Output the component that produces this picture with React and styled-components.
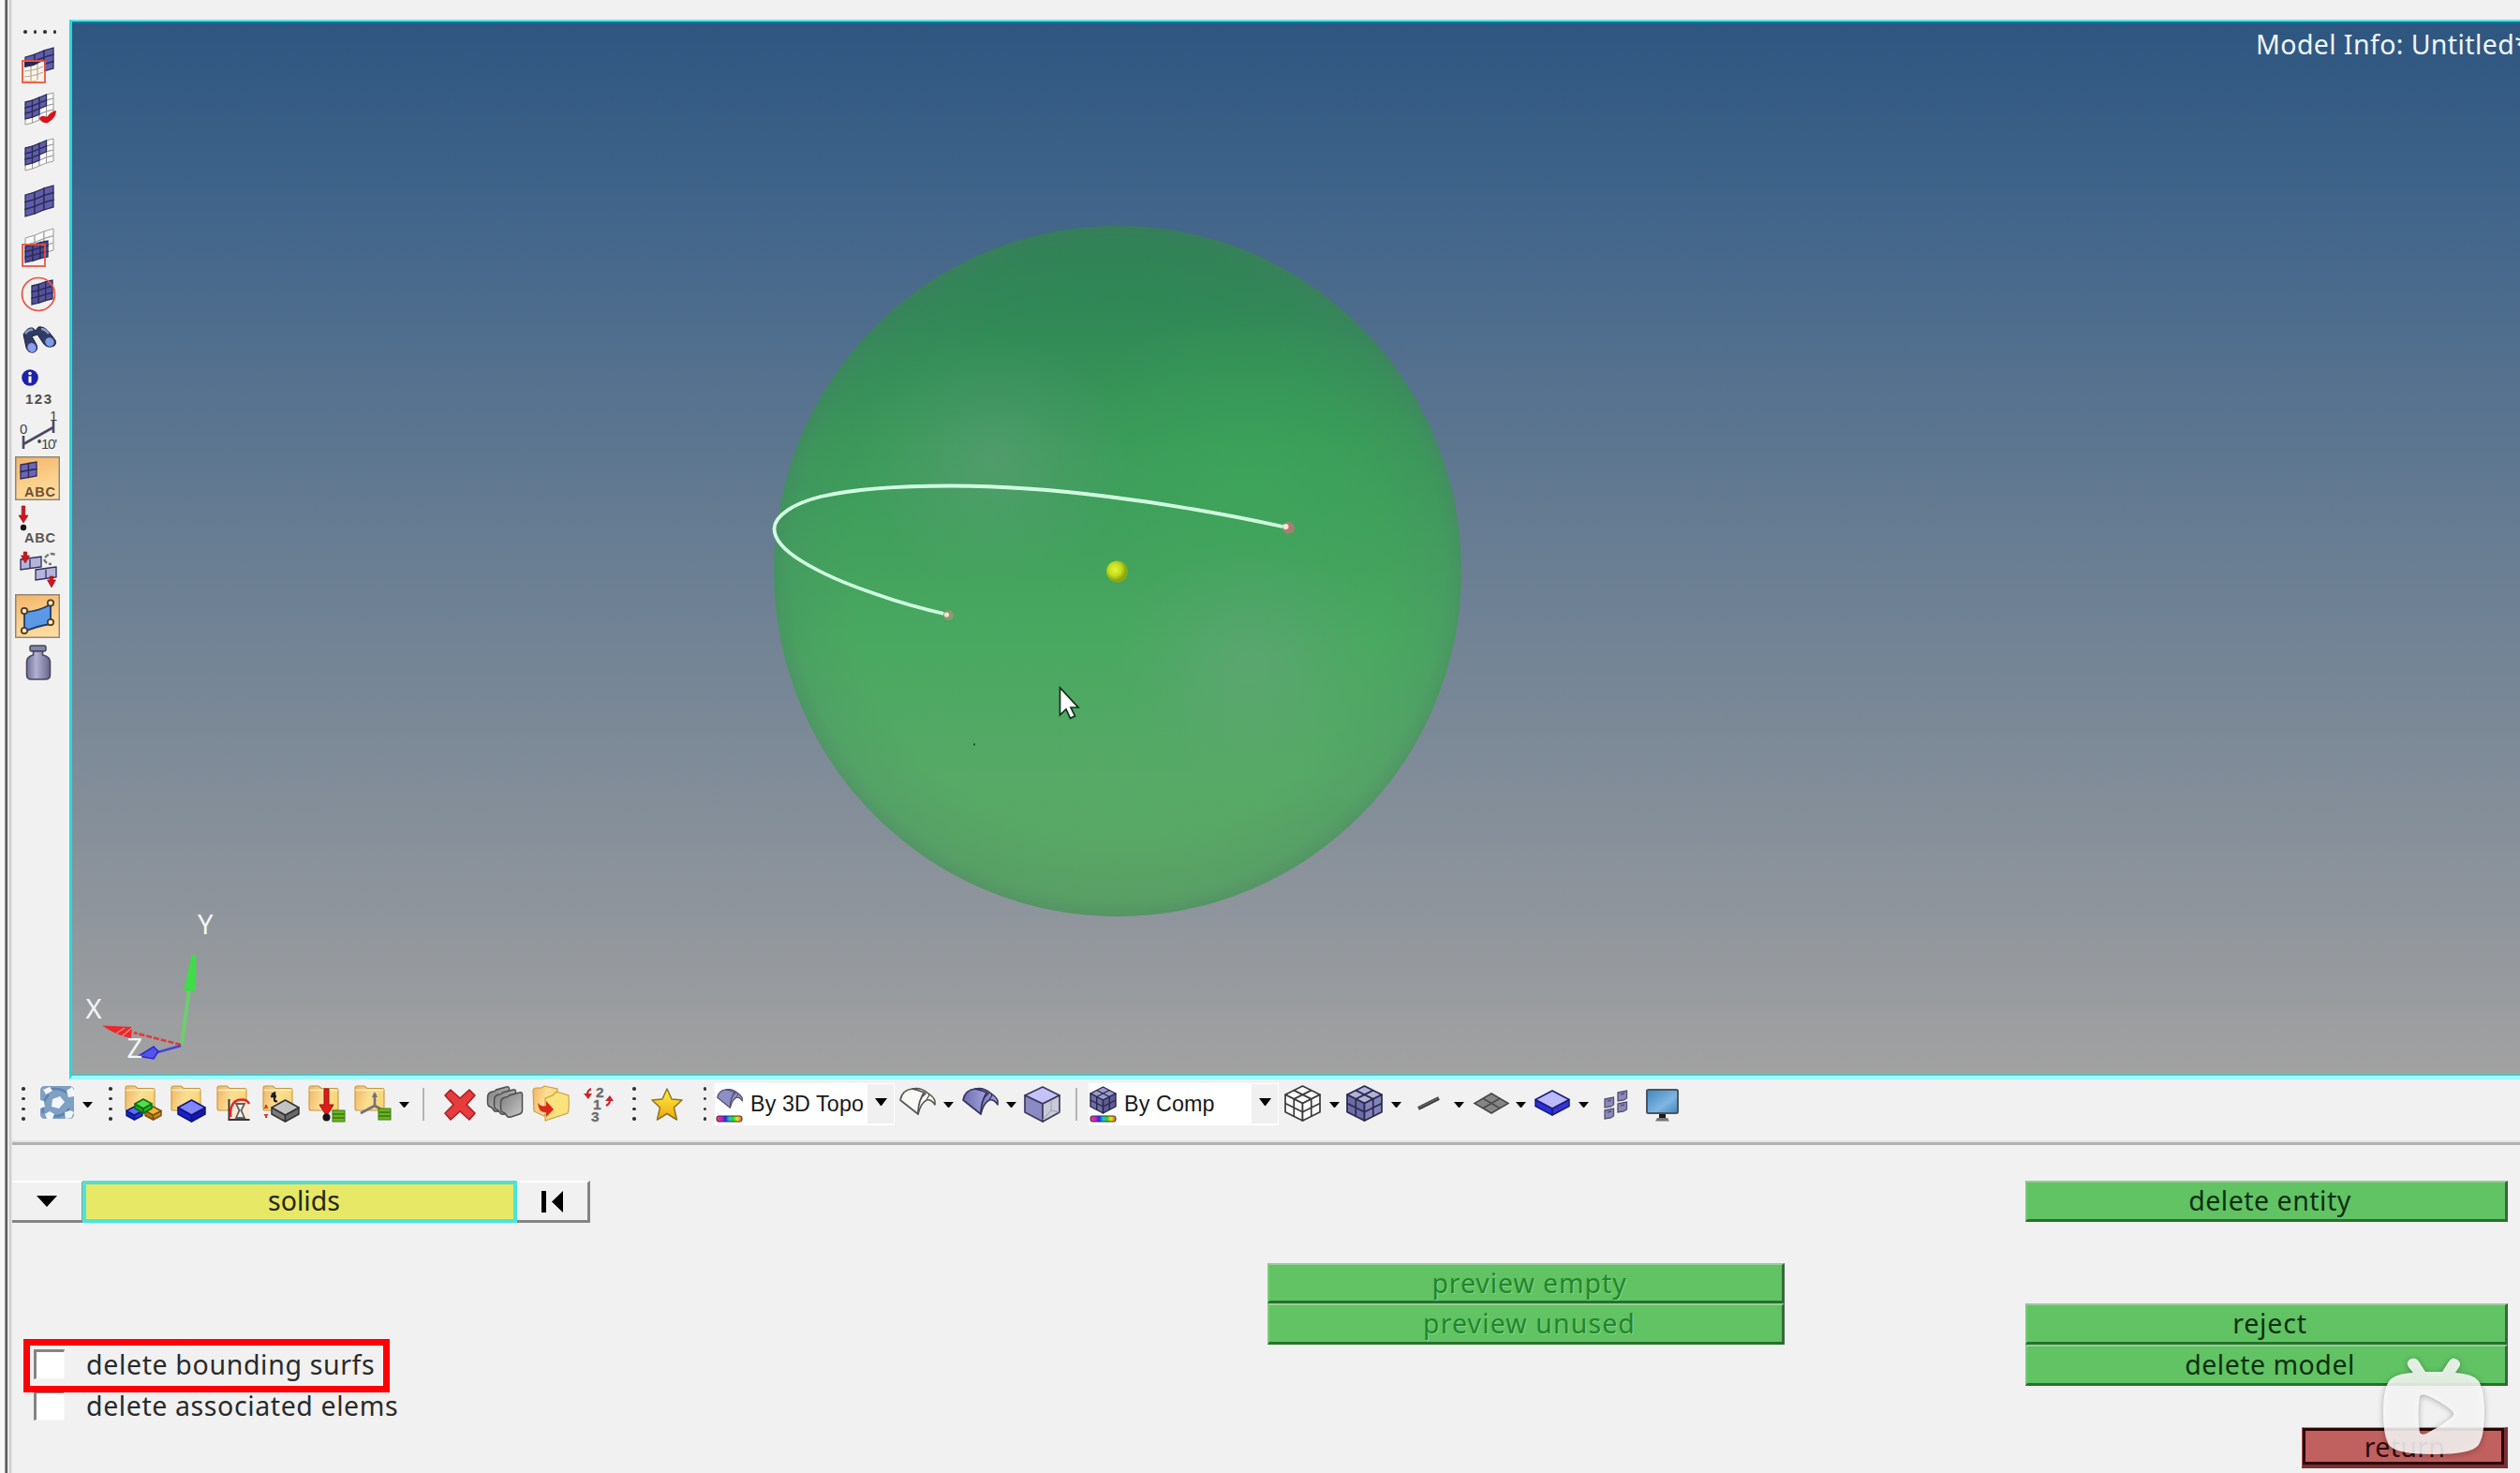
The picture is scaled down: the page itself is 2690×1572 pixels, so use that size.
import React from "react";
import styled, { createGlobalStyle, css } from "styled-components";

const Global = createGlobalStyle`
  html, body { margin: 0; padding: 0; background: #f1f1f1; }
  * { box-sizing: border-box; }
  body { overflow: hidden; }
`;

const sans = `"Noto Sans", "Open Sans", sans-serif`;
const arial = `"Liberation Sans", Arial, sans-serif`;

const Window = styled.div`
  display: flex;
  width: 2690px;
  height: 1572px;
  overflow: hidden;
  background: #f1f1f1;
  font-family: ${sans};
  color: #1c1c1c;
`;
const Splitter = styled.div`
  flex: none;
  width: 13px;
  background: linear-gradient(90deg, #f8f8f8 0 5px, #8e8e8e 5px 6px, #5e5e5e 6px 8px, #e8e8e8 8px 10px, #cfcfcf 10px 12px, #e4e4e4 12px);
`;
const Main = styled.div`
  flex: 1;
  min-width: 0;
  display: flex;
  flex-direction: column;
`;
const Upper = styled.div`
  display: flex;
  height: 1152px;
  flex: none;
`;
const SideBar = styled.div`
  width: 61px;
  flex: none;
  display: flex;
  flex-direction: column;
  padding-left: 3px;
`;
const SideGrip = styled.div`
  display: flex;
  gap: 7px;
  padding: 32px 0 0 9px;
  height: 44.5px;
`;
const Dot = styled.i`
  width: 3.6px;
  height: 3.6px;
  border-radius: 50%;
  background: #333;
`;
const SideButton = styled.div`
  width: 48px;
  height: 47px;
  margin-bottom: 2.15px;
  flex: none;
  ${(p) =>
    p.$active &&
    css`
      background: linear-gradient(165deg, #f3b36a, #fcd08c 55%, #ffe0a4);
      box-shadow: inset 0 0 0 1.5px #8f8778;
    `}
`;
const Glyph = styled.svg`
  display: block;
  overflow: visible;
`;
const Viewport = styled.div`
  flex: 1;
  position: relative;
  margin-top: 21px;
  border: solid #20dbe0;
  border-width: 2px 0 4px 3px;
  border-top-color: #62dde2;
  border-bottom-color: #98fdfd;
  background: linear-gradient(180deg, #2d5680 0%, #40648a 17%, #667c92 48%, #8c939b 82%, #a2a2a2 100%);
  box-shadow: inset 0 2px 0 #0c7c92, inset 0 -2px 0 #63bcbd;
`;
const Scene = styled.svg`
  position: absolute;
  inset: 0;
  width: 100%;
  height: 100%;
`;
const ModelInfo = styled.div`
  position: absolute;
  left: 2331px;
  right: 0;
  top: 4px;
  overflow: hidden;
  white-space: nowrap;
  font-size: 28.5px;
  line-height: 40px;
  letter-spacing: 0.4px;
  color: #f0f5fa;
`;
const ToolBar = styled.div`
  height: 67px;
  flex: none;
  display: flex;
  align-items: flex-start;
  padding-top: 2px;
`;
const Tool = styled.div`
  flex: none;
  width: ${(p) => p.$w}px;
  height: 48px;
  margin-left: ${(p) => p.$gap || 0}px;
`;
const Grip = styled.div`
  flex: none;
  width: 4px;
  height: 36px;
  margin: 6px 0 0 ${(p) => p.$gap}px;
  display: flex;
  flex-direction: column;
  justify-content: space-between;
`;
const Divider = styled.div`
  flex: none;
  width: 2px;
  height: 35px;
  margin: 7px 0 0 ${(p) => p.$gap}px;
  background: #b4b4b4;
`;
const Caret = styled.div`
  flex: none;
  box-sizing: content-box;
  width: 1px;
  height: 0;
  border: solid transparent;
  border-width: 6px 5px 0;
  border-top-color: #0a0a0a;
  margin: 22px 0 0 ${(p) => p.$gap}px;
`;
const Combo = styled.div`
  flex: none;
  display: flex;
  height: 45px;
  margin: 2px 0 0 ${(p) => p.$gap}px;
  background: #fff;
  width: ${(p) => p.$w}px;
  padding: 1px;
`;
const ComboText = styled.span`
  flex: 1;
  font: 23.3px/43px ${arial};
  letter-spacing: 0.1px;
  color: #1a1a1a;
  padding-left: 7px;
  white-space: nowrap;
`;
const ComboArrow = styled.div`
  width: 28px;
  height: 42px;
  background: #f0f0f1;
  display: flex;
  justify-content: center;
  &::after {
    content: "";
    box-sizing: content-box;
    margin-top: 15px;
    width: 1px;
    height: 0;
    border: solid transparent;
    border-width: 8px 6px 0;
    border-top-color: #000;
  }
`;
const Panel = styled.div`
  position: relative;
  flex: 1;
  border-top: 3px solid #b1b1b1;
  box-shadow: 0 -2px 0 #e2e2e2;
  padding-top: 38px;
  display: grid;
  justify-content: start;
  grid-template-rows: repeat(7, 43.8px);
  grid-template-columns: 617px 723px 552px 257px 515px;
`;
const Selector = styled.div`
  grid-area: 1 / 1;
  display: flex;
`;
const FlatButton = styled.div`
  width: ${(p) => p.$w}px;
  height: 45px;
  display: flex;
  align-items: center;
  justify-content: center;
  border-top: 2px solid #fdfdfd;
  border-bottom: 3px solid #858585;
  border-right: ${(p) => (p.$edge ? "3px solid #858585" : "1px solid #999")};
`;
const EntityField = styled.div`
  width: 464px;
  height: 45px;
  border: 4px solid #48e6de;
  border-top-color: #5adcc6;
  border-radius: 1px;
  background: #e7e866;
  font-size: 28.5px;
  line-height: 34px;
  text-align: center;
  padding-left: 9px;
  color: #26260c;
`;
const Action = styled.div`
  grid-column: ${(p) => p.$col};
  grid-row: ${(p) => p.$row};
  background: #61c363;
  border: solid;
  border-width: 2px 3px 3px 2px;
  border-color: #9cc99b #37693a #227429 #78cc79;
  text-align: center;
  font-size: 28.5px;
  line-height: 38px;
  letter-spacing: ${(p) => p.$ls || 0.5}px;
  padding-left: 8px;
  color: ${(p) => (p.$off ? "#21862c" : "#0d3010")};
  ${(p) => p.$off && "text-shadow: 1px 1px 0 #86d386;"}
`;
const Return = styled.div`
  grid-column: 5;
  grid-row: 7;
  justify-self: end;
  width: 220px;
  background: #c0605f;
  border: solid;
  border-width: 1px 4px 4px 1px;
  border-color: #c98080 #7b2f31 #7b2f31 #b05050;
  & > span {
    display: block;
    height: 100%;
    border: 3px solid #2b0606;
    text-align: center;
    font-size: 28.5px;
    line-height: 34px;
    letter-spacing: 0.3px;
    padding-left: 3px;
    color: #2c0c0c;
  }
`;
const Option = styled.label`
  grid-column: 1;
  grid-row: ${(p) => p.$row};
  display: flex;
  align-items: center;
  padding: 0 0 2px 23px;
  gap: 23px;
  font-size: 28.5px;
  letter-spacing: ${(p) => p.$ls}px;
  white-space: nowrap;
  color: #2a2a2a;
`;
const Box = styled.span`
  width: 33px;
  height: 32px;
  background: #fff;
  border: solid #f6f6f6;
  border-width: 3px 1px 1px 3px;
  border-top-color: #848484;
  border-left-color: #848484;
`;
const Highlight = styled.div`
  position: absolute;
  left: 12px;
  top: 207px;
  width: 391px;
  height: 57px;
  border: 7px solid #ff0006;
`;
const Watermark = styled.svg`
  position: absolute;
  left: 2521px;
  top: 220px;
  width: 130px;
  height: 120px;
`;

/* ---- side bar glyphs ---- */

// A wavy n x n patch; `cells` lists the filled cells by index.
function Patch({ x, y, w = 30, h = 22, rise = 10, cells = [], n = 3, color = "#605eaa", line = "#2c2b58" }) {
  const px = (u) => x + u * w;
  const py = (u, v) => y + rise + v * h - (rise * (3 * u * u - 2 * u * u * u) * 0.6 + rise * u * 0.4);
  const out = [];
  for (let r = 0; r < n; r++)
    for (let c = 0; c < n; c++) {
      const u0 = c / n, u1 = (c + 1) / n, v0 = r / n, v1 = (r + 1) / n;
      const on = cells === "all" || cells.includes(r * n + c);
      out.push(
        <polygon
          key={r + "-" + c}
          points={`${px(u0)},${py(u0, v0)} ${px(u1)},${py(u1, v0)} ${px(u1)},${py(u1, v1)} ${px(u0)},${py(u0, v1)}`}
          fill={on ? color : "#fafafa"}
          stroke={on ? line : "#9a9a98"}
          strokeWidth={on ? 1.3 : 1}
        />
      );
    }
  out.sort((a, b) => (a.props.fill === color) - (b.props.fill === color));
  return <g>{out}</g>;
}

const label = { fontFamily: arial, fontWeight: 700 };
const RedArrow = ({ x, y, h, w = 9 }) => (
  <path d={`M${x - 1.8} ${y}h3.6v${h - 8}h${w / 2 - 1.8}l${-w / 2} 8l${-w / 2} -8h${w / 2 - 1.8}z`} fill="#d3141c" stroke="#7f1015" strokeWidth="0.6" />
);

const sideIcons = [
  { g: <><Patch x={11} y={6} cells="all" /><path d="M10 20.500h21v18q-10 4-21 4z" fill="#fbf3e8" /><path d="M10 31q12-1 20-5M10 37q12-1 20-5M17 24v18M24 22v18" fill="none" stroke="#b3aaa0" strokeWidth="1.200" /><path d="M10 21h18l-8 4-10 2z" fill="#25264f" /><path d="M10 40q7 2 13 0v3H10z" fill="#f5cf9c" /><rect x="8" y="20" width="24" height="23" fill="none" stroke="#ee4d36" strokeWidth="1.700" /></> },
  { g: <><Patch x={11} y={5} h={24} n={4} cells={[0, 1, 2, 4, 5, 6, 8, 9]} /><path d="M26 32q3-4 8-1q4-6 10-7q0 8-9 13q-7 1-9-5z" fill="#d8131a" /></> },
  { g: <><Patch x={11} y={5} h={24} n={4} cells={[0, 1, 2, 4, 5, 6, 8, 9]} /></> },
  { g: <Patch x={11} y={6} h={23} cells="all" /> },
  { g: <><Patch x={11} y={3} h={23} /><Patch x={11} y={16} w={24} h={17} rise={6} cells="all" color="#4d4c92" /><rect x="8" y="20" width="24" height="23" fill="none" stroke="#ee4d36" strokeWidth="1.700" /></> },
  { g: <><Patch x={18} y={9} w={22} h={20} rise={6} cells="all" color="#54539a" /><circle cx="25" cy="24" r="17.500" fill="none" stroke="#ee5440" strokeWidth="1.700" /></> },
  { g: <><path d="M9 18q4-8 10-7l3 3 3-4q6-1 11 5l7 9q2 6-4 7-6 1-9-4l-6-9-6 2 5 9q2 6-3 8-6 1-8-5z" fill="#303b63" stroke="#1a2140" /><ellipse cx="18" cy="32" rx="4.500" ry="5" fill="#8b9df0" transform="rotate(-30 18 32)" /><ellipse cx="37" cy="26" rx="4.500" ry="5" fill="#7f9ce6" transform="rotate(-40 37 26)" /><path d="M11 17q4-5 8-4M28 12q4 0 8 5" stroke="#8d9bc8" strokeWidth="2.500" fill="none" /></> },
  { g: <><circle cx="16" cy="15" r="8.800" fill="#1e22a8" /><rect x="14.500" y="13.500" width="3" height="7" fill="#fff" /><circle cx="16" cy="10.500" r="1.800" fill="#fff" /><text x="11" y="43" {...label} fontSize="15" textLength="28" fill="#4f4f4f">123</text></> },
  { g: <><path d="M9 27v14M41 10v14M9 36L41 18" stroke="#4c4a63" strokeWidth="2.600" fill="none" /><text x="5" y="25" fontFamily={arial} fontSize="15" fill="#444">0</text><text x="37" y="11" fontFamily={arial} fontSize="15" fill="#444">1</text><circle cx="26" cy="33" r="1.900" fill="#444" /><text x="28" y="41" fontFamily={arial} fontSize="15" textLength="17" fill="#444">10'</text></> },
  { active: true, g: <><Patch x={6} y={6} w={17} h={15} rise={3} n={2} cells="all" color="#6a66b8" /><text x="10" y="42.500" {...label} fontSize="14.500" textLength="33" fill="#6d4f33">ABC</text></> },
  { g: <><RedArrow x={9} y={4} h={18} w={10} /><circle cx="9" cy="27" r="3.200" fill="#151515" /><text x="10" y="42.500" {...label} fontSize="14.500" textLength="33" fill="#555">ABC</text></> },
  { g: <><Patch x={6} y={9} w={22} h={11} rise={3} n={1} cells="all" color="#b4b4da" /><Patch x={22} y={20} w={22} h={11} rise={3} n={1} cells="all" color="#b4b4da" /><path d="M16 12v10M33 23v9" stroke="#3b3b6d" strokeWidth="1.400" /><RedArrow x={11} y={4} h={12} /><RedArrow x={39} y={30} h={12} /><path d="M32 10q5-6 11-3M31 12q2 5 8 5" stroke="#777" strokeWidth="2.400" strokeDasharray="5 2" fill="none" /></> },
  { active: true, g: <><path d="M10 19q14 0 28-8v21q-14 2-28 8z" fill="#5b98e6" stroke="#1f3d6d" strokeWidth="1.800" />{[[10, 18], [38, 9.500], [38, 30], [10, 39]].map(([a, b]) => <circle key={a + "" + b} cx={a} cy={b} r="3.200" fill="#f7e5c0" stroke="#4a3b26" strokeWidth="1.700" />)}</> },
  { g: <><rect x="16" y="6" width="17" height="6" rx="2" fill="#8583a6" stroke="#45445f" strokeWidth="1.500" /><path d="M19.500 12h10v4q8 2 8 7v14q0 5-5 5h-15q-5 0-5-5V23q0-5 7-7z" fill="url(#bottle)" stroke="#45445f" strokeWidth="1.500" /></> },
];

/* ---- bottom toolbar glyphs; the drawing's y axis starts at the row's top ---- */

const Folder = () => (
  <g>
    <path d="M1 7q0-2 2-2h8l3 2.500h16q2 0 2 2V29q0 2-2 2H3q-2 0-2-2z" fill="url(#folder)" stroke="#c9983f" strokeWidth="1.100" />
    <path d="M1.500 9.500h30" stroke="#fff0bf" strokeWidth="1.400" />
  </g>
);
const Slab = ({ x, y, w, d, t, top, left, right, line }) => (
  <g stroke={line} strokeWidth="1.500" strokeLinejoin="round">
    <path d={`M${x} ${y + d / 2}v${t}l${w / 2} ${d / 2}v${-t}z`} fill={left} />
    <path d={`M${x + w} ${y + d / 2}v${t}l${-w / 2} ${d / 2}v${-t}z`} fill={right} />
    <path d={`M${x} ${y + d / 2}l${w / 2} ${-d / 2}l${w / 2} ${d / 2}l${-w / 2} ${d / 2}z`} fill={top} />
  </g>
);
const Lattice = ({ x, y, w, h, top, left, right, line = "#2a2a33" }) => {
  const q = h / 4, m = x + w / 2, e = x + w, s = h / 2;
  return (
    <g stroke={line} strokeWidth={w > 32 ? 1.7 : 1.4} strokeLinejoin="round" fill="none">
      <path d={`M${x} ${y + q}L${m} ${y}L${e} ${y + q}L${m} ${y + 2 * q}z`} fill={top} />
      <path d={`M${x} ${y + q}v${s}L${m} ${y + h}v${-s}z`} fill={left} />
      <path d={`M${e} ${y + q}v${s}L${m} ${y + h}v${-s}z`} fill={right} />
      <path d={`M${x + w / 4} ${y + q / 2}L${x + w * 0.75} ${y + q * 1.5}v${s}M${x + w * 0.75} ${y + q / 2}L${x + w / 4} ${y + q * 1.5}v${s}M${x} ${y + q + s / 2}L${m} ${y + 2 * q + s / 2}L${e} ${y + q + s / 2}`} />
    </g>
  );
};
const Curved = ({ fill, line, s = 1 }) => (
  <g transform={`scale(${s})`} strokeLinejoin="round">
    <path d="M1 20q2-11 13-12l13 3q-5 5-7 24z" fill={fill} stroke={line} strokeWidth="1.600" />
    <path d="M14 8q9-2 17 5q6 4 7 8v4q-4-6-9-5q-6 3-9 15q0-17 8-22q-5-3-14-5z" fill={fill} stroke={line} strokeWidth="1.500" />
    <path d="M29 19q4-4 2-6" fill="none" stroke={line} strokeWidth="1.300" />
  </g>
);
const Spectrum = ({ y }) => <rect x="1" y={y} width="27" height="6" rx="2" fill="url(#spectrum)" stroke="#333" strokeWidth="1" />;
const Sheet = () => <><rect x="0" y="30" width="13" height="12" fill="#69b51e" stroke="#3f7d12" /><path d="M0 34h13M0 38h13" stroke="#3b7411" strokeWidth="1.300" /></>;

const Draw = ({ w, children }) => (
  <Glyph width={w} height="48" viewBox={`0 0 ${w} 48`}>{children}</Glyph>
);
const T = ({ w, gap, children }) => (
  <Tool $w={w} $gap={gap}><Draw w={w}>{children}</Draw></Tool>
);
const Dots = ({ gap }) => (
  <Grip $gap={gap}><Dot /><Dot /><Dot /><Dot /></Grip>
);

const HiddenDefs = styled.svg`
  position: absolute;
  width: 0;
  height: 0;
`;

function Defs() {
  return (
    <HiddenDefs>
      <defs>
        <linearGradient id="folder" x1="0" y1="0.300" x2="1" y2="0.600"><stop offset="0" stopColor="#f3b96b" /><stop offset="0.500" stopColor="#fbdf92" /><stop offset="1" stopColor="#f7d574" /></linearGradient>
        <linearGradient id="spectrum"><stop offset="0.050" stopColor="#ff2a8a" /><stop offset="0.200" stopColor="#c31ee8" /><stop offset="0.350" stopColor="#2430e8" /><stop offset="0.500" stopColor="#13c8d8" /><stop offset="0.650" stopColor="#2fd22c" /><stop offset="0.820" stopColor="#f2e018" /><stop offset="1" stopColor="#f2501c" /></linearGradient>
        <linearGradient id="bottle"><stop offset="0" stopColor="#6f6d92" /><stop offset="0.400" stopColor="#b3b1d2" /><stop offset="1" stopColor="#67658b" /></linearGradient>
        <linearGradient id="star" x1="0" y1="0" x2="0" y2="1"><stop offset="0" stopColor="#fff04a" /><stop offset="1" stopColor="#eda80a" /></linearGradient>
        <linearGradient id="violet"><stop offset="0" stopColor="#6d6cad" /><stop offset="1" stopColor="#a5a4e2" /></linearGradient>
        <linearGradient id="metal" x1="0" y1="0" x2="1" y2="1"><stop offset="0" stopColor="#7d7d7d" /><stop offset="1" stopColor="#c9c9c9" /></linearGradient>
        <linearGradient id="screen" x1="0" y1="0" x2="1" y2="1"><stop offset="0" stopColor="#3f86bd" /><stop offset="0.600" stopColor="#7fb6e2" /><stop offset="1" stopColor="#4384bb" /></linearGradient>
        <linearGradient id="sphere" x1="0" y1="0" x2="0" y2="1"><stop offset="0" stopColor="#2a8151" /><stop offset="0.120" stopColor="#308856" /><stop offset="0.320" stopColor="#3a9a59" /><stop offset="0.600" stopColor="#49a860" /><stop offset="0.800" stopColor="#56a966" /><stop offset="1" stopColor="#5ca564" /></linearGradient>
        <radialGradient id="rim"><stop offset="0.780" stopColor="#567a70" stopOpacity="0" /><stop offset="0.950" stopColor="#4a7e68" stopOpacity="0.160" /><stop offset="1" stopColor="#4a7868" stopOpacity="0.380" /></radialGradient>
        <radialGradient id="sheen"><stop offset="0" stopColor="#7da091" stopOpacity="0.320" /><stop offset="0.500" stopColor="#7da091" stopOpacity="0.140" /><stop offset="1" stopColor="#7da091" stopOpacity="0" /></radialGradient>
        <radialGradient id="glow"><stop offset="0" stopColor="#3fb05c" stopOpacity="0.350" /><stop offset="1" stopColor="#3fb05c" stopOpacity="0" /></radialGradient>
        <radialGradient id="yellow" cx="0.400" cy="0.400"><stop offset="0" stopColor="#e6f53a" /><stop offset="0.600" stopColor="#c3dc1c" /><stop offset="1" stopColor="#8aa814" /></radialGradient>
      </defs>
    </HiddenDefs>
  );
}

function ModelScene() {
  return (
    <Scene viewBox="77 23 2613 1125" preserveAspectRatio="none">
      <ellipse cx="1193" cy="609.500" rx="367" ry="368.500" fill="url(#sphere)" />
      <ellipse cx="1193" cy="609.500" rx="367" ry="368.500" fill="url(#rim)" />
      <ellipse cx="1330" cy="500" rx="200" ry="170" fill="url(#glow)" />
      <ellipse cx="1060" cy="490" rx="150" ry="130" fill="url(#sheen)" />
      <ellipse cx="1335" cy="705" rx="140" ry="130" fill="url(#sheen)" />
      <path d="M1012 656C990 651 960 643 935 634C905 624 877 612 856 599C838 588 826.500 577 826.500 564C827 550 848 537 876 530C915 521 962 518.500 1014 518.500C1065 518.500 1120 522 1183 530C1240 537 1310 549 1374 563" fill="none" stroke="#d0ffe0" strokeWidth="3.800" />
      <circle cx="1375.500" cy="563.500" r="6.500" fill="#a5806f" /><circle cx="1372.500" cy="562" r="3" fill="#f4e6dc" />
      <circle cx="1012.500" cy="656.500" r="5.500" fill="#8b9a70" /><circle cx="1010.500" cy="656" r="2.600" fill="#efe4d8" />
      <circle cx="1192.500" cy="610" r="11.500" fill="url(#yellow)" />
      <rect x="1039" y="793.500" width="2" height="2" fill="#1c5230" />
      <path d="M1131.500 734v29l6.500-6 4.500 9.500 5-2.500-4.500-9h8z" fill="#fff" stroke="#11301a" strokeWidth="1.700" />
      <path d="M194 1115L202 1055" stroke="#6bcf6b" strokeWidth="4" />
      <path d="M204.500 1019h5l-.500 38.500h-13z" fill="#41dc49" />
      <path d="M193 1115L143 1102" stroke="#e03a3c" strokeWidth="2.500" strokeDasharray="6 2" />
      <path d="M109 1094.500l32 1.500-1 12q-16-3-31-13.500z" fill="#e82a2c" />
      <path d="M130 1106l12-10M124 1103l9-6" stroke="#f58a84" strokeWidth="1.200" />
      <path d="M193 1116L168 1123" stroke="#4646d8" strokeWidth="2.500" />
      <path d="M148 1127l16-10 5 5-5 8z" fill="#5454ea" stroke="#2a2ad0" strokeWidth="1.500" />
      <g fontFamily={sans} fontSize="29" fill="#f4f6f7">
        <text x="211" y="997">Y</text>
        <text x="91.500" y="1086.500">X</text>
        <text x="135.500" y="1128.500">Z</text>
      </g>
    </Scene>
  );
}

function MainToolBar() {
  return (
    <ToolBar>
      <Dots gap={10} />
      <T w={38} gap={15}>
        <path d="M6 5h26q5 0 5 5v25q0 5-5 5H6q-5 0-5-5V10q0-5 5-5z" fill="#7f9fc3" />
        <path d="M5 12q12-9 28 2M4 34q-2-12 6-20M12 37q14 2 20-8" stroke="#5d83ae" strokeWidth="2.500" fill="none" />
        <path d="M4 9l7-3 3 4-7 4zM14 19l8-3 5 6-6 7-8-2zM29 10l6-4 2 4v6l-6 1zM1 20l4 1 1 6-5 2zM6 35l5-3 5 3-2 5H8zM27 33l6-2 4 2-3 6-6 1z" fill="#f2f7fb" />
      </T>
      <Caret $gap={7.5} />
      <Dots gap={17.5} />
      <T w={40} gap={13}>
        <Folder />
        <Slab x={2} y={27} w={17} d={9} t={5} top="#5d6dff" left="#1822c4" right="#2631de" line="#111a8c" />
        <Slab x={22} y={27} w={17} d={9} t={5} top="#f3b238" left="#b87614" right="#cf8a1c" line="#7d4d0d" />
        <Slab x={11} y={19} w={18} d={10} t={5} top="#4fe04a" left="#1ba01e" right="#24b327" line="#126a16" />
      </T>
      <T w={40} gap={9}>
        <Folder />
        <Slab x={8} y={20} w={29} d={16} t={7} top="#7f86ff" left="#1a1ecf" right="#1417b0" line="#10127c" />
      </T>
      <T w={40} gap={9}>
        <Folder />
        <rect x="13" y="21" width="22" height="20" fill="#fbe9d6" />
        <path d="M13.500 19v22h22" stroke="#3b3434" strokeWidth="2" fill="none" />
        <path d="M15 38q-1-15 8-18 9-2 12 4" stroke="#dd2a25" strokeWidth="2.600" fill="none" />
        <path d="M21 24h9l-3.500 7 3.500 8h-9l3.500-8zM21 24h9M21 39h9" stroke="#5f5f5f" strokeWidth="1.800" fill="#eee" />
      </T>
      <T w={41} gap={9}>
        <Folder />
        <path d="M10 14l3-1.500V20q0 2 3 1M9 16h6" stroke="#1b1b1b" strokeWidth="2.300" fill="none" />
        <path d="M4 29v-4M4 35v4" stroke="#c93a1c" strokeWidth="2" /><path d="M1.500 29h5l-2.500-4zM1.500 35h5l-2.500 4z" fill="#d43c1c" />
        <Slab x={10} y={20} w={29} d={16} t={7} top="#c3c3c3" left="#7c7c7c" right="#696969" line="#333" />
      </T>
      <T w={41} gap={8}>
        <Folder />
        <path d="M17 8h5v17h5l-7.500 12-7.500-12h5z" fill="#e01a1c" stroke="#9c1012" />
        <circle cx="19.500" cy="38.500" r="4" fill="#151515" />
        <g transform="translate(26 1)"><Sheet /></g>
      </T>
      <T w={41} gap={8}>
        <Folder />
        <path d="M22 13v14M22 26L7 34M22 26l7 4" stroke="#74707a" strokeWidth="2.600" fill="none" /><path d="M19 17l3-6 3 6z" fill="#74707a" />
        <g transform="translate(26 -1)"><Sheet /></g>
      </T>
      <Caret $gap={6.5} />
      <Divider $gap={14} />
      <T w={34} gap={21}>
        <path d="M7 9l10 9 10-9 6 6-9 10 9 9-6 7-10-9-10 9-6-7 9-9-9-10z" fill="#e73c3c" stroke="#a82023" strokeWidth="1.600" strokeLinejoin="round" />
      </T>
      <T w={41} gap={11}>
        {[[0, 0], [7, 3], [14, 6]].map(([a, b]) => (
          <path key={a} d={`M${a + 1.5} ${b + 17}q0-5 5-6q3 0 4-2l11-3q3-1 3 2v17q0 3-3 4l-9 3q-4 1-5-2q-2-3-4-3q-2-1-2-4z`} fill="url(#metal)" stroke="#4d4d4d" strokeWidth="1.500" />
        ))}
      </T>
      <T w={42} gap={8}>
        <path d="M1 10q0-3 4-3h5l3-2 14 3v9l-14 20-11-5z" fill="url(#folder)" stroke="#ca9c3c" strokeWidth="1.100" />
        <path d="M14 18l8-3 4-4 13 4q1 16-1 19l-24 8z" fill="#fae27c" stroke="#ca9c3c" strokeWidth="1.100" />
        <path d="M6 23q4 5 9 3v-5l8 9-8 8v-5Q7 34 6 23z" fill="#dd271b" />
      </T>
      <T w={34} gap={12}>
        <g fontFamily={arial} fontWeight="700" fontSize="15.500" fill="#6b6b6b" stroke="#6b6b6b" strokeWidth="0.300">
          <text x="14" y="17">2</text><text x="11" y="29.500">1</text><text x="9" y="42.500">3</text>
        </g>
        <path d="M9 8q-4 2-4 6M25 26q4-2 4-6" stroke="#c8262b" strokeWidth="2.200" fill="none" /><path d="M1 13h9l-4 6zM24 21h9l-4-6z" fill="#c8262b" />
      </T>
      <Dots gap={19.5} />
      <T w={35} gap={16}>
        <path d="M17 8l5 11 11 1-8.500 8 3 13L17 34.500 6.500 41l3-13L1 20l11-1z" fill="url(#star)" stroke="#8d7420" strokeWidth="1.500" strokeLinejoin="round" />
      </T>
      <Dots gap={20.5} />
      <Combo $gap={8.5} $w={192}>
        <Glyph width="30" height="43" viewBox="0 3 30 43"><g transform="translate(1 3)"><Curved fill="#8f8ec4" line="#4a4a6a" s={0.72} /></g><Spectrum y={37} /></Glyph>
        <ComboText>By 3D Topo</ComboText>
        <ComboArrow />
      </Combo>
      <T w={40} gap={5}><Curved fill="#f8f8f6" line="#55534f" /></T>
      <Caret $gap={6.5} />
      <T w={40} gap={9}><Curved fill="url(#violet)" line="#34335a" /></T>
      <Caret $gap={7} />
      <T w={40} gap={8.5}>
        <g stroke="#3c3b5e" strokeWidth="1.700" strokeLinejoin="round">
          <path d="M1 15L20 6l18 9-18 9z" fill="#c4c2f6" /><path d="M1 15v18l19 10V24z" fill="#8b8ac4" /><path d="M38 15v18L20 43V24z" fill="#c9c9d8" /><path d="M20 41l9-10 9 2M29 31V20" fill="none" stroke="#9b9bb4" strokeWidth="1" />
        </g>
      </T>
      <Divider $gap={15} />
      <Combo $gap={12} $w={203}>
        <Glyph width="30" height="43" viewBox="0 3 30 43"><Lattice x={1} y={6} w={27} h={28} top="#9c9ccb" left="#6d6ca4" right="#5d5c92" line="#26264a" /><Spectrum y={37} /></Glyph>
        <ComboText>By Comp</ComboText>
        <ComboArrow />
      </Combo>
      <T w={39} gap={6}><Lattice x={1} y={5} w={37} h={37} top="#fff" left="#fff" right="#fff" line="#3a3a3a" /></T>
      <Caret $gap={8.5} />
      <T w={39} gap={7.5}><Lattice x={1} y={5} w={37} h={37} top="#b3b2d6" left="#6d6ca4" right="#8482b8" line="#2a2950" /></T>
      <Caret $gap={8.5} />
      <T w={24} gap={17.5}><path d="M1 29L23 18" stroke="#3c3c3c" strokeWidth="4" /><path d="M1 28.500L23 17.500" stroke="#777" strokeWidth="1" /></T>
      <Caret $gap={14.5} />
      <T w={38} gap={10}><path d="M1 23.500L19 13l18 10.500L19 34z" fill="#858585" stroke="#4a4a4a" strokeWidth="1.600" /><path d="M10 18.200l18 10.500M28 18.200L10 28.700" stroke="#4a4a4a" strokeWidth="1.600" /></T>
      <Caret $gap={7} />
      <T w={39} gap={9}><Slab x={1} y={10} w={36} d={19} t={7} top="#bcb9fb" left="#2a2ee0" right="#3436d4" line="#1b1b78" /></T>
      <Caret $gap={8} />
      <T w={28} gap={15}>
        {[[2, 18], [16, 11], [2, 30], [16, 23]].map(([a, b]) => (
          <path key={a + "-" + b} d={`M${a} ${b + 1}l9.500-2v8l-3 2-6.500 1zM${a + 3} ${b + 3}l4-1`} fill="#8d8bb6" stroke="#504e78" strokeWidth="1.300" />
        ))}
      </T>
      <T w={36} gap={18}>
        <rect x="1" y="9" width="33" height="25" rx="1.500" fill="url(#screen)" stroke="#4a5560" strokeWidth="2" />
        <path d="M14 35h7v4h-7z" fill="#1a1a1a" /><path d="M12 39h11l2 3.500H10z" fill="#777" />
      </T>
    </ToolBar>
  );
}

export default function App() {
  return (
    <Window>
      <Global />
      <Defs />
      <Splitter />
      <Main>
        <Upper>
          <SideBar>
            <SideGrip><Dot /><Dot /><Dot /><Dot /></SideGrip>
            {sideIcons.map((s, i) => (
              <SideButton key={i} $active={s.active}>
                <Glyph width="48" height="47" viewBox="0 0 48 47">{s.g}</Glyph>
              </SideButton>
            ))}
          </SideBar>
          <Viewport>
            <ModelScene />
            <ModelInfo>Model Info: Untitled*</ModelInfo>
          </Viewport>
        </Upper>
        <MainToolBar />
        <Panel>
          <Selector>
            <FlatButton $w={75}>
              <Glyph width="24" height="12"><path d="M1 0h22L12 12z" fill="#000" /></Glyph>
            </FlatButton>
            <EntityField>solids</EntityField>
            <FlatButton $w={78} $edge>
              <Glyph width="24" height="23"><path d="M0 0h5v23H0zM23 0v23L11 11.500z" fill="#000" /></Glyph>
            </FlatButton>
          </Selector>
          <Option $row={5} $ls={0.65}><Box />delete bounding surfs</Option>
          <Option $row={6} $ls={0.6}><Box />delete associated elems</Option>
          <Action $col={3} $row={3} $off $ls={0.9}>preview empty</Action>
          <Action $col={3} $row={4} $off $ls={1.1}>preview unused</Action>
          <Action $col={5} $row={1}>delete entity</Action>
          <Action $col={5} $row={4} $ls={0.8}>reject</Action>
          <Action $col={5} $row={5}>delete model</Action>
          <Return><span>return</span></Return>
          <Highlight />
          <Watermark viewBox="2534 1445 130 120">
            <path
              fillRule="evenodd"
              d="M2572 1454q6-4 10 2l7 11h18l7-11q4-6 9-2 5 3 2 8l-4 6q18 1 24 8 7 8 7 34 0 27-7 36-8 9-47 9t-47-9q-7-9-7-36 0-26 7-34 6-7 25-8l-5-6q-3-5 1-8zM2583 1493q-3 20 0 39 2 3 7 1 14-7 28-18 2-3 0-6-13-11-28-17-5-2-7 1z"
              fill="#fff"
              fillOpacity="0.840"
              filter="drop-shadow(0 1px 3px rgba(0,0,0,.35))"
            />
          </Watermark>
        </Panel>
      </Main>
    </Window>
  );
}
